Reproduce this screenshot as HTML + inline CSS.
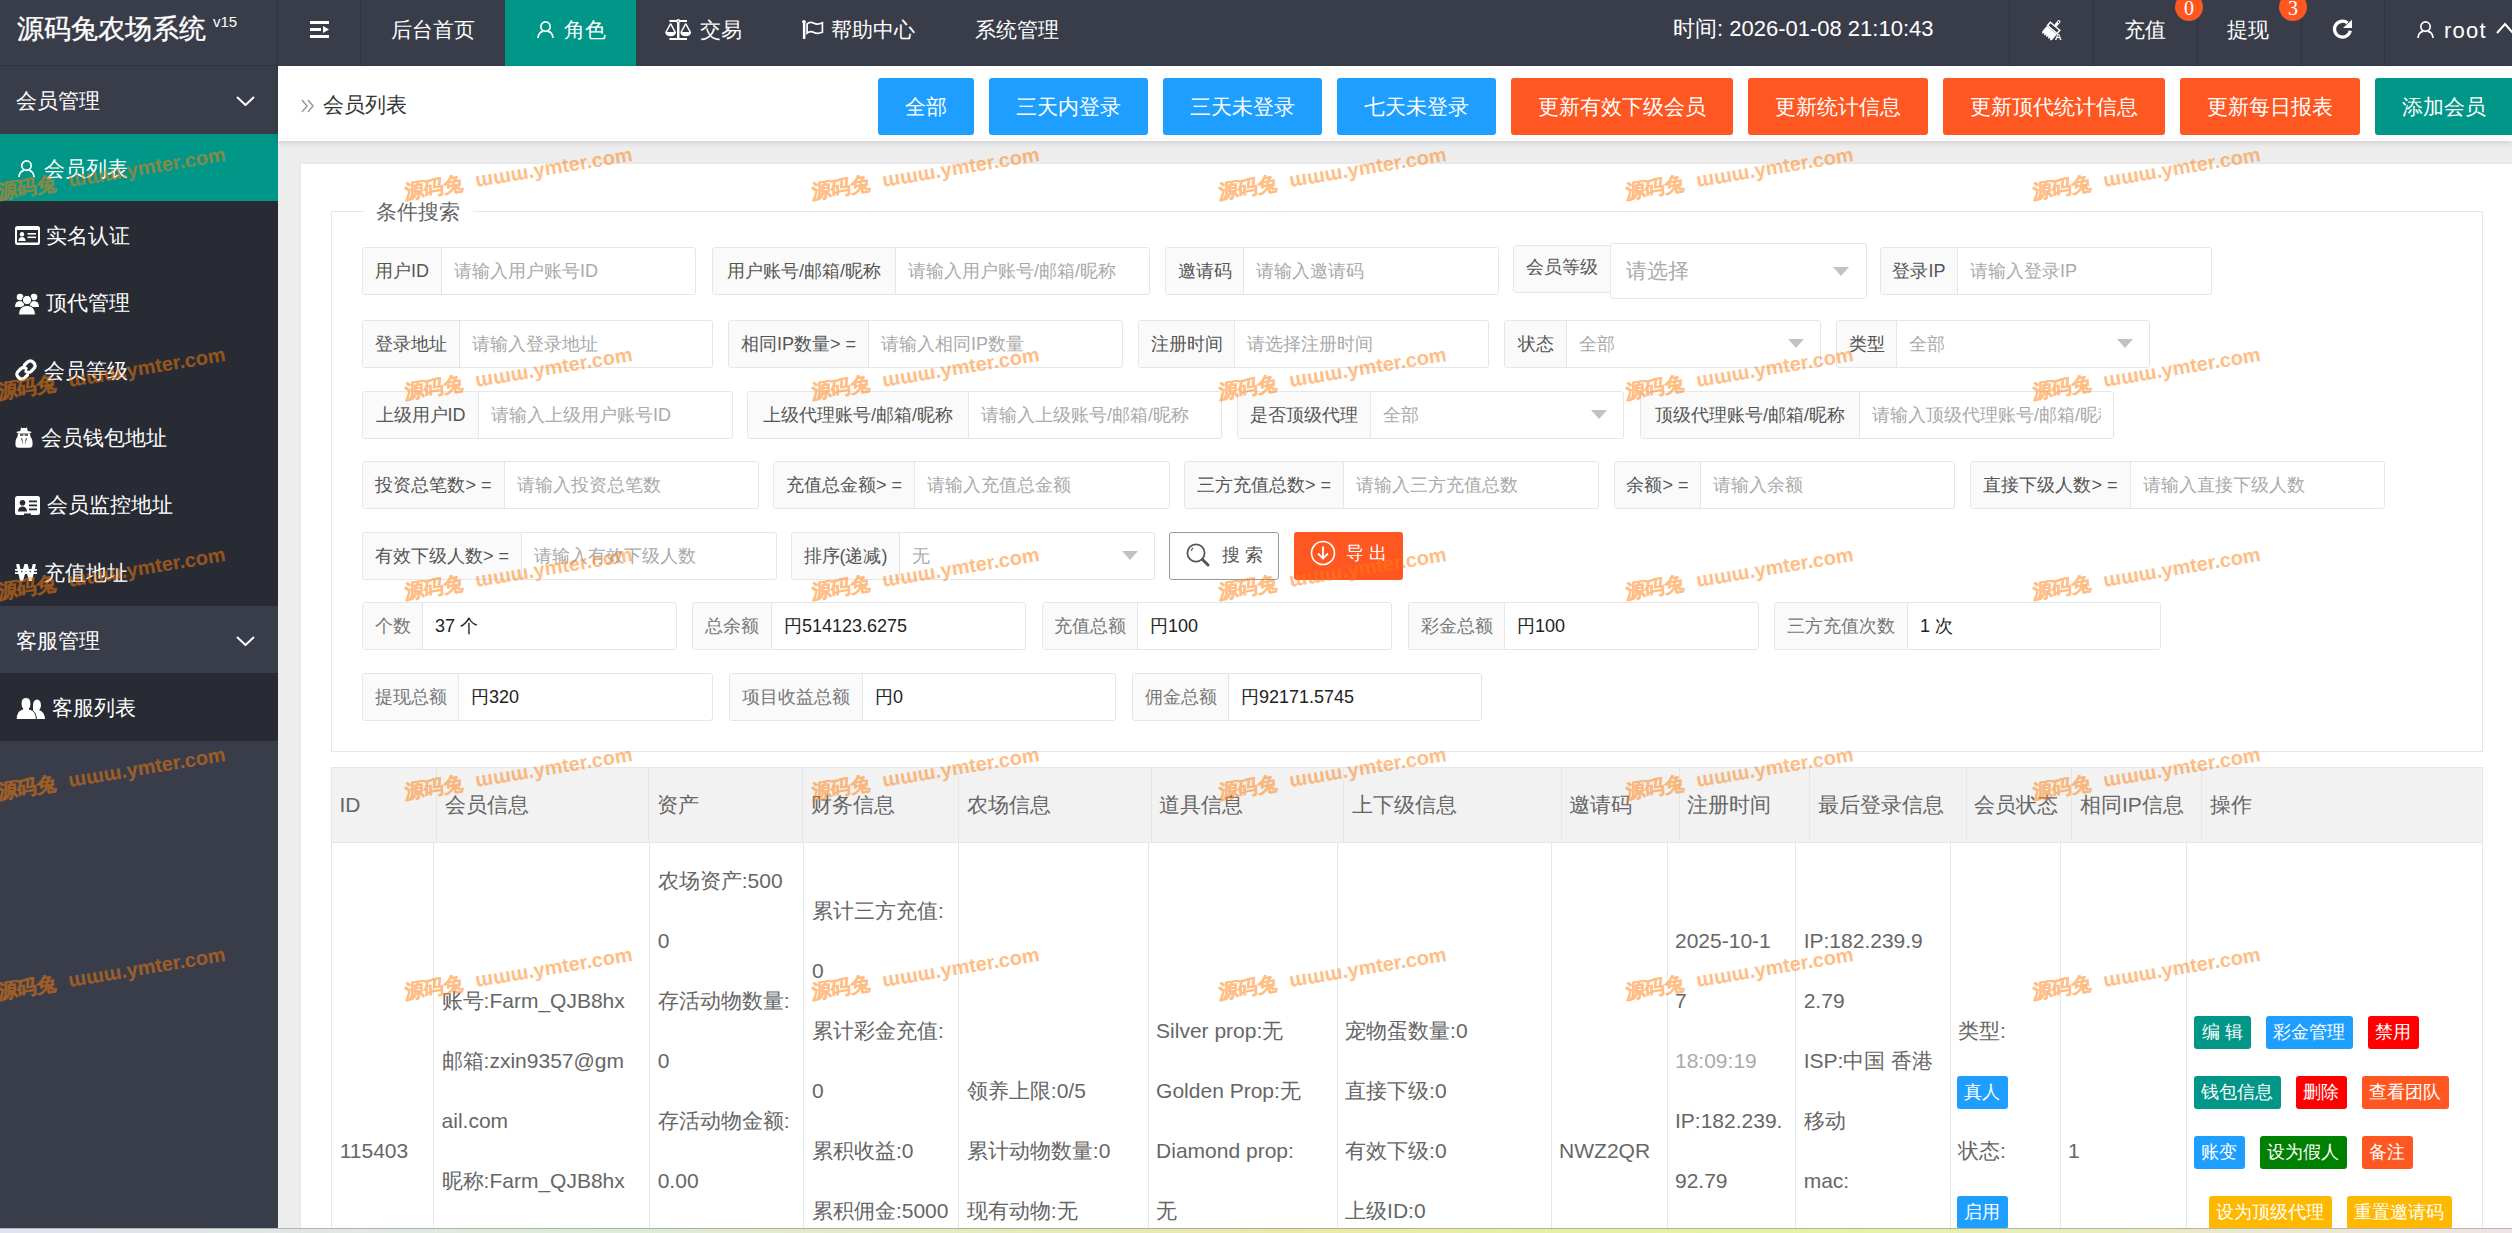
<!DOCTYPE html><html><head><meta charset="utf-8"><title>会员列表</title><style>
*{margin:0;padding:0;box-sizing:border-box}
html,body{width:2512px;height:1233px;overflow:hidden;background:#ededed}
body{position:relative;font-family:"Liberation Sans",sans-serif;color:#666}
.a{position:absolute}
.hd{left:0;top:0;width:2512px;height:66px;background:#393d49}
.hdt{position:absolute;color:#fff;font-size:21px;line-height:24px;white-space:nowrap}
.sep{position:absolute;top:0;width:1px;height:66px;background:#30333d}
.side{left:0;top:66px;width:278px;height:1167px;background:#393d49}
.sitem{position:absolute;left:0;width:278px;background:#282b33;color:#fff;font-size:21px}
.sgrp{position:absolute;left:0;width:278px;background:#393d49;color:#fff;font-size:21px}
.stx{position:absolute;white-space:nowrap;line-height:24px}
.bc{left:278px;top:66px;width:2234px;height:75px;background:#fff;box-shadow:0 2px 5px rgba(0,0,0,.12)}
.btn{position:absolute;top:78px;height:57px;border-radius:3px;color:#fff;font-size:21px;line-height:57px;text-align:center;white-space:nowrap}
.card{left:301px;top:164px;width:2211px;height:1070px;background:#fff;box-shadow:0 0 4px rgba(0,0,0,.05)}
.fs{left:331px;top:211px;width:2152px;height:541px;border:1px solid #e6e6e6;border-radius:0}
.grp{position:absolute;height:48px;border:1px solid #e6e6e6;border-radius:3px;background:#fff}
.lab{position:absolute;left:0;top:0;bottom:0;background:#fafafa;border-right:1px solid #e6e6e6;font-size:18px;color:#555;text-align:center;line-height:46px;white-space:nowrap;border-radius:2px 0 0 2px}
.inp{position:absolute;top:0;bottom:0;font-size:18px;color:#aaa;line-height:46px;padding-left:12px;white-space:nowrap;overflow:hidden}
.val{color:#222}
.arr{position:absolute;width:0;height:0;border-left:8.5px solid transparent;border-right:8.5px solid transparent;border-top:9px solid #c2c2c2}
.th{left:331px;top:767px;width:2152px;height:76px;background:#f2f2f2;border:1px solid #e6e6e6}
.vl{position:absolute;width:1px;background:#e6e6e6}
.tx{position:absolute;font-size:21px;color:#666;white-space:nowrap;line-height:60px}
.bdg{position:absolute;height:33px;border-radius:3px;color:#fff;font-size:18px;line-height:33px;text-align:center;white-space:nowrap}
.wm{position:absolute;white-space:nowrap;transform-origin:0 50%;pointer-events:none}
</style></head><body>
<div class="a hd"></div>
<div class="a" style="left:0;top:65px;width:278px;height:1px;background:#30333c"></div>
<div class="hdt" style="left:17px;top:14px;font-size:27px;line-height:30px;-webkit-text-stroke:0.35px #fff">源码兔农场系统</div>
<div class="hdt" style="left:213px;top:13px;font-size:15px;line-height:17px">v15</div>
<div class="sep" style="left:277px"></div><div class="sep" style="left:360px"></div>
<svg class="a" style="left:310px;top:21px" width="20" height="17" viewBox="0 0 20 17"><rect x="0" y="0" width="19" height="3" fill="#fff"/><rect x="0" y="7" width="11" height="3" fill="#fff"/><rect x="0" y="14" width="19" height="3" fill="#fff"/><path d="M13 5 L19 8.5 L13 12Z" fill="#fff"/></svg>
<div class="hdt" style="left:391px;top:18px">后台首页</div>
<div class="a" style="left:505px;top:0;width:131px;height:66px;background:#009688"></div>
<svg class="a" style="left:537px;top:21px" width="17" height="17" viewBox="0 0 17 17"><circle cx="8.5" cy="5.6" r="4.7" fill="none" stroke="#fff" stroke-width="1.7"/><path d="M1 17 C1.3 13 3.5 10.8 6 10.3 M11 10.3 C13.5 10.8 15.7 13 16 17" fill="none" stroke="#fff" stroke-width="1.7"/></svg>
<div class="hdt" style="left:564px;top:18px">角色</div>
<svg class="a" style="left:665px;top:19px" width="27" height="22" viewBox="0 0 27 22"><rect x="4.4" y="1" width="17.6" height="2" fill="#fff"/><circle cx="13.2" cy="2.1" r="2.1" fill="#fff"/><circle cx="13.2" cy="2.1" r="0.7" fill="#393d49"/><rect x="12" y="3.5" width="2.5" height="16" fill="#fff"/><rect x="4.4" y="19" width="17.6" height="2" fill="#fff"/><path d="M5.6 4.6 L0.9 13.3 M5.6 4.6 L10.3 13.3 M20.7 4.6 L16 13.3 M20.7 4.6 L25.4 13.3" fill="none" stroke="#fff" stroke-width="1.4"/><path d="M0.2 13 H11 Q10.6 17.3 5.6 17.3 Q0.6 17.3 0.2 13Z M15.3 13 H26.1 Q25.7 17.3 20.7 17.3 Q15.7 17.3 15.3 13Z" fill="#fff"/></svg>
<div class="hdt" style="left:700px;top:18px">交易</div>
<svg class="a" style="left:800px;top:18px" width="26" height="24" viewBox="0 0 26 24"><rect x="2.9" y="3" width="2.5" height="18" fill="#fff"/><circle cx="3.9" cy="3.8" r="1.8" fill="#fff"/><path d="M7.1 5.8 C9.5 3.8 12 4.3 14 5.3 C16 6.3 18.5 6.6 22.4 4.8 V14.2 C18.5 15.8 16 15.5 14 14.5 C12 13.5 9.5 13.2 7.1 15.2 Z" fill="none" stroke="#fff" stroke-width="1.7"/></svg>
<div class="hdt" style="left:831px;top:18px">帮助中心</div>
<div class="hdt" style="left:975px;top:18px">系统管理</div>
<div class="hdt" style="left:1673px;top:17px;font-size:22px">时间: 2026-01-08 21:10:43</div>
<div class="sep" style="left:2009px"></div>
<div class="sep" style="left:2093px"></div>
<div class="sep" style="left:2197px"></div>
<div class="sep" style="left:2301px"></div>
<div class="sep" style="left:2384px"></div>
<svg class="a" style="left:2038px;top:18px" width="26" height="23" viewBox="0 0 26 23"><g transform="translate(13.5 12.5) rotate(40)"><rect x="-1.6" y="-13" width="3.2" height="7.5" rx="1.6" fill="#fff"/><circle cx="0" cy="-11" r="0.8" fill="#393d49"/><rect x="-6.2" y="-5.5" width="12.4" height="4.2" fill="none" stroke="#fff" stroke-width="1.5"/><path d="M-6.5 -0.5 H6.5 V6.5 L5.2 8.6 L3.9 6.5 L2.6 8.6 L1.3 6.5 L0 8.6 L-1.3 6.5 L-2.6 8.6 L-3.9 6.5 L-5.2 8.6 L-6.5 6.5Z" fill="#fff"/></g><text x="16.8" y="22" font-size="9.5" font-weight="bold" fill="#fff" font-family="Liberation Sans">A</text></svg>
<div class="hdt" style="left:2124px;top:18px">充值</div>
<div class="a" style="left:2175px;top:-7px;width:28px;height:28px;border-radius:14px;background:#ff5722;color:#fff;font-size:20px;line-height:30px;text-align:center;font-family:'Liberation Serif',serif">0</div>
<div class="hdt" style="left:2227px;top:18px">提现</div>
<div class="a" style="left:2279px;top:-7px;width:28px;height:28px;border-radius:14px;background:#ff5722;color:#fff;font-size:20px;line-height:30px;text-align:center;font-family:'Liberation Serif',serif">3</div>
<svg class="a" style="left:2332px;top:18px" width="22" height="22" viewBox="0 0 22 22"><path d="M18.28 12.75 A7.95 7.95 0 1 1 15.6 5.0" fill="none" stroke="#fff" stroke-width="3.3"/><path d="M20 1.7 V10 H11Z" fill="#fff"/></svg>
<svg class="a" style="left:2417px;top:21px" width="17" height="17" viewBox="0 0 17 17"><circle cx="8.5" cy="5.6" r="4.7" fill="none" stroke="#fff" stroke-width="1.7"/><path d="M1 17 C1.3 13 3.5 10.8 6 10.3 M11 10.3 C13.5 10.8 15.7 13 16 17" fill="none" stroke="#fff" stroke-width="1.7"/></svg>
<div class="hdt" style="left:2444px;top:19px;font-size:22px;letter-spacing:1.2px">root</div>
<svg class="a" style="left:2496px;top:22px" width="18" height="12" viewBox="0 0 18 12"><path d="M1 11 L9 2 L17 11" fill="none" stroke="#fff" stroke-width="2"/></svg>
<div class="a side"></div>
<div class="sgrp" style="top:66px;height:68px"><div class="stx" style="left:16px;top:23px">会员管理</div></div>
<svg class="a" style="left:236px;top:96px" width="19" height="10" viewBox="0 0 19 10"><path d="M1 1 L9.5 9 L18 1" fill="none" stroke="#fff" stroke-width="2"/></svg>
<div class="sitem" style="top:134px;height:68px;background:#009688"><div class="stx" style="left:44px;top:23px">会员列表</div></div>
<div class="sitem" style="top:201px;height:68px;background:#282b33"><div class="stx" style="left:46px;top:23px">实名认证</div></div>
<div class="sitem" style="top:268px;height:68px;background:#282b33"><div class="stx" style="left:46px;top:23px">顶代管理</div></div>
<div class="sitem" style="top:336px;height:68px;background:#282b33"><div class="stx" style="left:44px;top:23px">会员等级</div></div>
<div class="sitem" style="top:403px;height:68px;background:#282b33"><div class="stx" style="left:41px;top:23px">会员钱包地址</div></div>
<div class="sitem" style="top:470px;height:68px;background:#282b33"><div class="stx" style="left:47px;top:23px">会员监控地址</div></div>
<div class="sitem" style="top:538px;height:68px;background:#282b33"><div class="stx" style="left:44px;top:23px">充值地址</div></div>
<div class="sgrp" style="top:606px;height:67px"><div class="stx" style="left:16px;top:23px">客服管理</div></div>
<svg class="a" style="left:236px;top:636px" width="19" height="10" viewBox="0 0 19 10"><path d="M1 1 L9.5 9 L18 1" fill="none" stroke="#fff" stroke-width="2"/></svg>
<div class="sitem" style="top:673px;height:68px"><div class="stx" style="left:52px;top:23px">客服列表</div></div>
<svg class="a" style="left:18px;top:160px" width="17" height="17" viewBox="0 0 17 17"><circle cx="8.5" cy="5.6" r="4.7" fill="none" stroke="#fff" stroke-width="1.7"/><path d="M1 17 C1.3 13 3.5 10.8 6 10.3 M11 10.3 C13.5 10.8 15.7 13 16 17" fill="none" stroke="#fff" stroke-width="1.7"/></svg>
<svg class="a" style="left:15px;top:226px" width="25" height="19" viewBox="0 0 25 19"><rect x="0" y="0" width="25" height="19" rx="2.5" fill="#fff"/><rect x="2" y="4" width="21" height="12.5" fill="#282b33"/><circle cx="7" cy="8.2" r="2.2" fill="#fff"/><path d="M3.3 15 Q3.8 11 7 11 Q10.2 11 10.7 15Z" fill="#fff"/><rect x="12.5" y="7" width="8.5" height="1.6" fill="#fff"/><rect x="12.5" y="10.5" width="8.5" height="1.6" fill="#fff"/></svg>
<svg class="a" style="left:15px;top:292px" width="24" height="23" viewBox="0 0 24 23"><circle cx="5" cy="5" r="3.3" fill="#fff"/><circle cx="19" cy="5" r="3.3" fill="#fff"/><path d="M0 15 Q0 9 5 9 Q8 9 9 11 L9 15Z M24 15 Q24 9 19 9 Q16 9 15 11 L15 15Z" fill="#fff"/><circle cx="12" cy="8" r="4.6" fill="#fff" stroke="#282b33" stroke-width="1"/><path d="M3.5 23 Q3.5 14 12 13.3 Q20.5 14 20.5 23Z" fill="#fff" stroke="#282b33" stroke-width="1"/></svg>
<svg class="a" style="left:15px;top:359px" width="22" height="22" viewBox="0 0 22 22"><g fill="none" stroke="#fff" stroke-width="3.2" stroke-linecap="round"><path d="M9.5 6 L12.5 3 Q15.5 0.5 18.5 3.5 Q21.5 6.5 19 9.5 L16 12.5 Q13.5 14.5 11 12.5"/><path d="M12.5 16 L9.5 19 Q6.5 21.5 3.5 18.5 Q0.5 15.5 3 12.5 L6 9.5 Q8.5 7.5 11 9.5"/></g></svg>
<svg class="a" style="left:15px;top:427px" width="18" height="21" viewBox="0 0 18 21"><path d="M5 5.5 L6 0.6 Q9 1.6 12 0.6 L13 5.5Z" fill="#fff"/><ellipse cx="9" cy="5.2" rx="7.6" ry="1.4" fill="#fff"/><path d="M3 6.3 Q9 7.8 15 6.3 L15.3 9 Q17.6 12 17.6 17 Q17.6 20.8 14.8 20.8 H3.2 Q0.4 20.8 0.4 17 Q0.4 12 2.7 9Z" fill="#fff"/><rect x="5" y="7.2" width="3.4" height="1.5" fill="#282b33"/><rect x="9.6" y="7.2" width="3.4" height="1.5" fill="#282b33"/><path d="M6 11.3 L7.2 11.3 L8.2 18Z M12 11.3 L10.8 11.3 L9.8 18Z" fill="#282b33"/></svg>
<svg class="a" style="left:15px;top:496px" width="25" height="19" viewBox="0 0 25 19"><path d="M2.5 0 H22.5 Q25 0 25 2.5 V16.5 Q25 19 22.5 19 H16 V17.5 H9 V19 H2.5 Q0 19 0 16.5 V2.5 Q0 0 2.5 0Z" fill="#fff"/><circle cx="7.5" cy="6.8" r="2.8" fill="#282b33"/><path d="M3 15.5 Q3.3 10.5 7.5 10.5 Q11.7 10.5 12 15.5Z" fill="#282b33"/><rect x="14" y="4.5" width="8" height="1.8" fill="#282b33"/><rect x="14" y="8.5" width="8" height="1.8" fill="#282b33"/><rect x="14" y="12.5" width="8" height="1.8" fill="#282b33"/></svg>
<svg class="a" style="left:15px;top:564px" width="22" height="17" viewBox="0 0 22 17"><path d="M2.6 0 L6.6 16 L11 0.5 L15.4 16 L19.4 0" fill="none" stroke="#fff" stroke-width="3.2" stroke-linejoin="miter" stroke-miterlimit="10"/><rect x="0" y="5" width="22" height="1.8" fill="#fff"/><rect x="0" y="8.2" width="22" height="1.8" fill="#fff"/></svg>
<svg class="a" style="left:16px;top:697px" width="29" height="23" viewBox="0 0 29 23"><path d="M17 9 Q17 2.5 21 2.5 Q25 2.5 25 9 Q24.5 12 23 13 Q28.5 14.5 29 22 H17Z" fill="#fff"/><path d="M10 0.5 Q15 0.5 15 7 Q15 10.5 13 12 Q20 13.5 20.5 22.5 H0 Q0.5 13.5 7 12 Q5 10.5 5 7 Q5 0.5 10 0.5Z" fill="#fff" stroke="#282b33" stroke-width="1"/></svg>
<div class="a bc"></div>
<svg class="a" style="left:301px;top:99px" width="14" height="14" viewBox="0 0 14 14"><path d="M1 1 L6 7 L1 13 M7 1 L12 7 L7 13" fill="none" stroke="#999" stroke-width="1.5"/></svg>
<div class="a" style="left:323px;top:93px;font-size:21px;color:#333;line-height:24px;white-space:nowrap">会员列表</div>
<div class="btn" style="left:878px;width:96px;background:#1e9fff;">全部</div>
<div class="btn" style="left:989px;width:159px;background:#1e9fff;">三天内登录</div>
<div class="btn" style="left:1163px;width:159px;background:#1e9fff;">三天未登录</div>
<div class="btn" style="left:1337px;width:159px;background:#1e9fff;">七天未登录</div>
<div class="btn" style="left:1511px;width:222px;background:#ff5722;">更新有效下级会员</div>
<div class="btn" style="left:1748px;width:180px;background:#ff5722;">更新统计信息</div>
<div class="btn" style="left:1943px;width:222px;background:#ff5722;">更新顶代统计信息</div>
<div class="btn" style="left:2180px;width:180px;background:#ff5722;">更新每日报表</div>
<div class="btn" style="left:2375px;width:155px;background:#009688;padding-right:18px;">添加会员</div>
<div class="a card"></div>
<div class="a fs"></div>
<div class="a" style="left:363px;top:200px;padding:0 13px;background:#fff;font-size:21px;color:#666;line-height:24px;white-space:nowrap">条件搜索</div>
<div class="grp" style="left:362px;top:247px;width:334px">
<div class="lab" style="width:79px">用户ID</div>
<div class="inp" style="left:79px;right:12px">请输入用户账号ID</div>
</div>
<div class="grp" style="left:712px;top:247px;width:438px">
<div class="lab" style="width:183px">用户账号/邮箱/昵称</div>
<div class="inp" style="left:183px;right:12px">请输入用户账号/邮箱/昵称</div>
</div>
<div class="grp" style="left:1165px;top:247px;width:334px">
<div class="lab" style="width:78px">邀请码</div>
<div class="inp" style="left:78px;right:12px">请输入邀请码</div>
</div>
<div class="grp" style="left:1513px;top:245px;width:98px;height:48px;border-radius:3px 0 0 3px"><div class="lab" style="width:96px;border-right:0;line-height:43px">会员等级</div></div>
<div class="grp" style="left:1610px;top:243px;width:257px;height:56px"><div class="inp" style="left:0;line-height:53px;font-size:21px;padding-left:15px">请选择</div><div class="arr" style="left:222px;top:23px"></div></div>
<div class="grp" style="left:1880px;top:247px;width:332px">
<div class="lab" style="width:77px">登录IP</div>
<div class="inp" style="left:77px;right:12px">请输入登录IP</div>
</div>
<div class="grp" style="left:362px;top:320px;width:351px">
<div class="lab" style="width:97px">登录地址</div>
<div class="inp" style="left:97px;right:12px">请输入登录地址</div>
</div>
<div class="grp" style="left:728px;top:320px;width:395px">
<div class="lab" style="width:140px">相同IP数量&gt; =</div>
<div class="inp" style="left:140px;right:12px">请输入相同IP数量</div>
</div>
<div class="grp" style="left:1138px;top:320px;width:351px">
<div class="lab" style="width:96px">注册时间</div>
<div class="inp" style="left:96px;right:12px">请选择注册时间</div>
</div>
<div class="grp" style="left:1504px;top:320px;width:317px">
<div class="lab" style="width:62px">状态</div>
<div class="inp" style="left:62px;right:12px">全部</div>
<div class="arr" style="left:283px;top:18px"></div>
</div>
<div class="grp" style="left:1836px;top:320px;width:314px">
<div class="lab" style="width:60px">类型</div>
<div class="inp" style="left:60px;right:12px">全部</div>
<div class="arr" style="left:280px;top:18px"></div>
</div>
<div class="grp" style="left:362px;top:391px;width:371px">
<div class="lab" style="width:116px">上级用户ID</div>
<div class="inp" style="left:116px;right:12px">请输入上级用户账号ID</div>
</div>
<div class="grp" style="left:747px;top:391px;width:475px">
<div class="lab" style="width:221px">上级代理账号/邮箱/昵称</div>
<div class="inp" style="left:221px;right:12px">请输入上级账号/邮箱/昵称</div>
</div>
<div class="grp" style="left:1237px;top:391px;width:387px">
<div class="lab" style="width:133px">是否顶级代理</div>
<div class="inp" style="left:133px;right:12px">全部</div>
<div class="arr" style="left:353px;top:18px"></div>
</div>
<div class="grp" style="left:1640px;top:391px;width:474px">
<div class="lab" style="width:219px">顶级代理账号/邮箱/昵称</div>
<div class="inp" style="left:219px;right:12px">请输入顶级代理账号/邮箱/昵称</div>
</div>
<div class="grp" style="left:362px;top:461px;width:397px">
<div class="lab" style="width:142px">投资总笔数&gt; =</div>
<div class="inp" style="left:142px;right:12px">请输入投资总笔数</div>
</div>
<div class="grp" style="left:773px;top:461px;width:397px">
<div class="lab" style="width:141px">充值总金额&gt; =</div>
<div class="inp" style="left:141px;right:12px">请输入充值总金额</div>
</div>
<div class="grp" style="left:1184px;top:461px;width:415px">
<div class="lab" style="width:159px">三方充值总数&gt; =</div>
<div class="inp" style="left:159px;right:12px">请输入三方充值总数</div>
</div>
<div class="grp" style="left:1614px;top:461px;width:341px">
<div class="lab" style="width:86px">余额&gt; =</div>
<div class="inp" style="left:86px;right:12px">请输入余额</div>
</div>
<div class="grp" style="left:1970px;top:461px;width:415px">
<div class="lab" style="width:160px">直接下级人数&gt; =</div>
<div class="inp" style="left:160px;right:12px">请输入直接下级人数</div>
</div>
<div class="grp" style="left:362px;top:532px;width:415px">
<div class="lab" style="width:159px">有效下级人数&gt; =</div>
<div class="inp" style="left:159px;right:12px">请输入有效下级人数</div>
</div>
<div class="grp" style="left:791px;top:532px;width:364px">
<div class="lab" style="width:108px">排序(递减)</div>
<div class="inp" style="left:108px;right:12px">无</div>
<div class="arr" style="left:330px;top:18px"></div>
</div>
<div class="a" style="left:1169.4px;top:532.3px;width:109.4px;height:47.4px;border:1px solid #999;border-radius:3px;background:#fff"></div>
<svg class="a" style="left:1186px;top:543px" width="26" height="25" viewBox="0 0 26 25"><circle cx="10" cy="10" r="8.6" fill="none" stroke="#555" stroke-width="1.8"/><path d="M16.5 16.5 L22 22" stroke="#555" stroke-width="3" stroke-linecap="round"/><path d="M5.5 8 Q5.5 6 7 5" fill="none" stroke="#555" stroke-width="1.2"/></svg>
<div class="a" style="left:1222px;top:543px;font-size:18px;color:#555;line-height:24px;letter-spacing:5px;white-space:nowrap">搜索</div>
<div class="a" style="left:1294.1px;top:532px;width:108.6px;height:47.7px;border-radius:3px;background:#ff5722"></div>
<svg class="a" style="left:1310px;top:540px" width="26" height="26" viewBox="0 0 26 26"><circle cx="13" cy="13" r="11.5" fill="none" stroke="#fff" stroke-width="1.6"/><path d="M13 6.5 V18 M8 13.5 L13 18.5 L18 13.5" fill="none" stroke="#fff" stroke-width="1.8"/></svg>
<div class="a" style="left:1346px;top:541px;font-size:18px;color:#fff;line-height:24px;letter-spacing:5px;white-space:nowrap">导出</div>
<div class="grp" style="left:362px;top:602px;width:315px">
<div class="lab" style="width:60px;color:#777">个数</div>
<div class="inp val" style="left:60px;right:12px">37 个</div>
</div>
<div class="grp" style="left:692px;top:602px;width:334px">
<div class="lab" style="width:79px;color:#777">总余额</div>
<div class="inp val" style="left:79px;right:12px">円514123.6275</div>
</div>
<div class="grp" style="left:1042px;top:602px;width:350px">
<div class="lab" style="width:95px;color:#777">充值总额</div>
<div class="inp val" style="left:95px;right:12px">円100</div>
</div>
<div class="grp" style="left:1408px;top:602px;width:351px">
<div class="lab" style="width:96px;color:#777">彩金总额</div>
<div class="inp val" style="left:96px;right:12px">円100</div>
</div>
<div class="grp" style="left:1774px;top:602px;width:387px">
<div class="lab" style="width:133px;color:#777">三方充值次数</div>
<div class="inp val" style="left:133px;right:12px">1 次</div>
</div>
<div class="grp" style="left:362px;top:673px;width:351px">
<div class="lab" style="width:96px;color:#777">提现总额</div>
<div class="inp val" style="left:96px;right:12px">円320</div>
</div>
<div class="grp" style="left:729px;top:673px;width:387px">
<div class="lab" style="width:133px;color:#777">项目收益总额</div>
<div class="inp val" style="left:133px;right:12px">円0</div>
</div>
<div class="grp" style="left:1132px;top:673px;width:350px">
<div class="lab" style="width:96px;color:#777">佣金总额</div>
<div class="inp val" style="left:96px;right:12px">円92171.5745</div>
</div>
<div class="a th"></div>
<div class="vl" style="left:436.0px;top:768px;height:74px"></div>
<div class="vl" style="left:648.0px;top:768px;height:74px"></div>
<div class="vl" style="left:802.4px;top:768px;height:74px"></div>
<div class="vl" style="left:958.4px;top:768px;height:74px"></div>
<div class="vl" style="left:1150.6px;top:768px;height:74px"></div>
<div class="vl" style="left:1343.4px;top:768px;height:74px"></div>
<div class="vl" style="left:1560.5px;top:768px;height:74px"></div>
<div class="vl" style="left:1678.6px;top:768px;height:74px"></div>
<div class="vl" style="left:1809.4px;top:768px;height:74px"></div>
<div class="vl" style="left:1965.6px;top:768px;height:74px"></div>
<div class="vl" style="left:2071.4px;top:768px;height:74px"></div>
<div class="vl" style="left:2201.3px;top:768px;height:74px"></div>
<div class="tx" style="left:339.5px;top:775px">ID</div>
<div class="tx" style="left:444.5px;top:775px">会员信息</div>
<div class="tx" style="left:656.5px;top:775px">资产</div>
<div class="tx" style="left:810.9px;top:775px">财务信息</div>
<div class="tx" style="left:966.9px;top:775px">农场信息</div>
<div class="tx" style="left:1159.1px;top:775px">道具信息</div>
<div class="tx" style="left:1351.9px;top:775px">上下级信息</div>
<div class="tx" style="left:1569.0px;top:775px">邀请码</div>
<div class="tx" style="left:1687.1px;top:775px">注册时间</div>
<div class="tx" style="left:1817.9px;top:775px">最后登录信息</div>
<div class="tx" style="left:1974.1px;top:775px">会员状态</div>
<div class="tx" style="left:2079.9px;top:775px">相同IP信息</div>
<div class="tx" style="left:2209.8px;top:775px">操作</div>
<div class="vl" style="left:331.2px;top:843px;height:400px"></div>
<div class="vl" style="left:433.1px;top:843px;height:400px"></div>
<div class="vl" style="left:649.2px;top:843px;height:400px"></div>
<div class="vl" style="left:803.4px;top:843px;height:400px"></div>
<div class="vl" style="left:958.3px;top:843px;height:400px"></div>
<div class="vl" style="left:1147.6px;top:843px;height:400px"></div>
<div class="vl" style="left:1336.6px;top:843px;height:400px"></div>
<div class="vl" style="left:1550.6px;top:843px;height:400px"></div>
<div class="vl" style="left:1666.5px;top:843px;height:400px"></div>
<div class="vl" style="left:1795.2px;top:843px;height:400px"></div>
<div class="vl" style="left:1949.6px;top:843px;height:400px"></div>
<div class="vl" style="left:2059.5px;top:843px;height:400px"></div>
<div class="vl" style="left:2186.4px;top:843px;height:400px"></div>
<div class="vl" style="left:2482.4px;top:843px;height:400px"></div>
<div class="tx" style="left:339.7px;top:1121px">115403</div>
<div class="tx" style="left:441.6px;top:971px">账号:Farm_QJB8hx<br>邮箱:zxin9357@gm<br>ail.com<br>昵称:Farm_QJB8hx</div>
<div class="tx" style="left:657.7px;top:851px">农场资产:500<br>0<br>存活动物数量:<br>0<br>存活动物金额:<br>0.00</div>
<div class="tx" style="left:811.9px;top:881px">累计三方充值:<br>0<br>累计彩金充值:<br>0<br>累积收益:0<br>累积佣金:5000</div>
<div class="tx" style="left:966.8px;top:1061px">领养上限:0/5<br>累计动物数量:0<br>现有动物:无</div>
<div class="tx" style="left:1156.1px;top:1001px">Silver prop:无<br>Golden Prop:无<br>Diamond prop:<br>无</div>
<div class="tx" style="left:1345.1px;top:1001px">宠物蛋数量:0<br>直接下级:0<br>有效下级:0<br>上级ID:0</div>
<div class="tx" style="left:1559.1px;top:1121px">NWZ2QR</div>
<div class="tx" style="left:1675.0px;top:911px">2025-10-1<br>7<br><span style="color:#aaa">18:09:19</span><br>IP:182.239.<br>92.79</div>
<div class="tx" style="left:1803.7px;top:911px">IP:182.239.9<br>2.79<br>ISP:中国 香港<br>移动<br>mac:</div>
<div class="tx" style="left:1958.1px;top:1001px">类型:<br><br>状态:<br></div>
<div class="tx" style="left:2068.0px;top:1121px">1</div>
<div class="bdg" style="left:1957.0px;top:1075.8px;width:50.6px;background:#1e9fff">真人</div>
<div class="bdg" style="left:1957.0px;top:1195.8px;width:50.6px;background:#1e9fff">启用</div>
<div class="bdg" style="left:2193.9px;top:1015.9px;width:56.9px;background:#009688">编 辑</div>
<div class="bdg" style="left:2266.0px;top:1015.9px;width:86.8px;background:#1e9fff">彩金管理</div>
<div class="bdg" style="left:2368.0px;top:1015.9px;width:50.8px;background:#ff0000">禁用</div>
<div class="bdg" style="left:2193.9px;top:1075.8px;width:86.9px;background:#009688">钱包信息</div>
<div class="bdg" style="left:2295.9px;top:1075.8px;width:51.0px;background:#ff0000">删除</div>
<div class="bdg" style="left:2361.9px;top:1075.8px;width:87.0px;background:#ff5722">查看团队</div>
<div class="bdg" style="left:2193.9px;top:1135.9px;width:50.8px;background:#1e9fff">账变</div>
<div class="bdg" style="left:2259.9px;top:1135.9px;width:87.0px;background:#008000">设为假人</div>
<div class="bdg" style="left:2361.9px;top:1135.9px;width:51.0px;background:#ff5722">备注</div>
<div class="bdg" style="left:2208.7px;top:1195.8px;width:122.9px;background:#ffb800">设为顶级代理</div>
<div class="bdg" style="left:2346.9px;top:1195.8px;width:104.9px;background:#ffb800">重置邀请码</div>
<div class="a" style="left:0;top:1228px;width:2512px;height:1px;background:linear-gradient(90deg,#b6b6c0 0%,#acb0a6 25%,#b0b08c 50%,#b0b88c 72%,#b8b4b4 100%)"></div>
<div class="a" style="left:0;top:1229px;width:2512px;height:4px;background:linear-gradient(90deg,#e2e2ee 0%,#deecd7 25%,#eae8ac 50%,#e4f2a5 72%,#ece8c8 88%,#f0e4e4 100%)"></div>
<div class="wm" style="left:-2px;top:179px;transform:rotate(-9.5deg);opacity:.5;color:#ff7f0a"><span style="display:inline-block;font-size:20px;font-weight:bold;-webkit-text-stroke:0.3px #ff7f0a;transform:skewX(-8deg);letter-spacing:-0.5px">源码兔</span><span style="display:inline-block;margin-left:13px;font-size:20px;font-weight:bold;letter-spacing:0px">ɯɯɯ.ymter.com</span></div>
<div class="wm" style="left:405px;top:179px;transform:rotate(-9.5deg);opacity:.5;color:#ff7f0a"><span style="display:inline-block;font-size:20px;font-weight:bold;-webkit-text-stroke:0.3px #ff7f0a;transform:skewX(-8deg);letter-spacing:-0.5px">源码兔</span><span style="display:inline-block;margin-left:13px;font-size:20px;font-weight:bold;letter-spacing:0px">ɯɯɯ.ymter.com</span></div>
<div class="wm" style="left:812px;top:179px;transform:rotate(-9.5deg);opacity:.5;color:#ff7f0a"><span style="display:inline-block;font-size:20px;font-weight:bold;-webkit-text-stroke:0.3px #ff7f0a;transform:skewX(-8deg);letter-spacing:-0.5px">源码兔</span><span style="display:inline-block;margin-left:13px;font-size:20px;font-weight:bold;letter-spacing:0px">ɯɯɯ.ymter.com</span></div>
<div class="wm" style="left:1219px;top:179px;transform:rotate(-9.5deg);opacity:.5;color:#ff7f0a"><span style="display:inline-block;font-size:20px;font-weight:bold;-webkit-text-stroke:0.3px #ff7f0a;transform:skewX(-8deg);letter-spacing:-0.5px">源码兔</span><span style="display:inline-block;margin-left:13px;font-size:20px;font-weight:bold;letter-spacing:0px">ɯɯɯ.ymter.com</span></div>
<div class="wm" style="left:1626px;top:179px;transform:rotate(-9.5deg);opacity:.5;color:#ff7f0a"><span style="display:inline-block;font-size:20px;font-weight:bold;-webkit-text-stroke:0.3px #ff7f0a;transform:skewX(-8deg);letter-spacing:-0.5px">源码兔</span><span style="display:inline-block;margin-left:13px;font-size:20px;font-weight:bold;letter-spacing:0px">ɯɯɯ.ymter.com</span></div>
<div class="wm" style="left:2033px;top:179px;transform:rotate(-9.5deg);opacity:.5;color:#ff7f0a"><span style="display:inline-block;font-size:20px;font-weight:bold;-webkit-text-stroke:0.3px #ff7f0a;transform:skewX(-8deg);letter-spacing:-0.5px">源码兔</span><span style="display:inline-block;margin-left:13px;font-size:20px;font-weight:bold;letter-spacing:0px">ɯɯɯ.ymter.com</span></div>
<div class="wm" style="left:-2px;top:379px;transform:rotate(-9.5deg);opacity:.5;color:#ff7f0a"><span style="display:inline-block;font-size:20px;font-weight:bold;-webkit-text-stroke:0.3px #ff7f0a;transform:skewX(-8deg);letter-spacing:-0.5px">源码兔</span><span style="display:inline-block;margin-left:13px;font-size:20px;font-weight:bold;letter-spacing:0px">ɯɯɯ.ymter.com</span></div>
<div class="wm" style="left:405px;top:379px;transform:rotate(-9.5deg);opacity:.5;color:#ff7f0a"><span style="display:inline-block;font-size:20px;font-weight:bold;-webkit-text-stroke:0.3px #ff7f0a;transform:skewX(-8deg);letter-spacing:-0.5px">源码兔</span><span style="display:inline-block;margin-left:13px;font-size:20px;font-weight:bold;letter-spacing:0px">ɯɯɯ.ymter.com</span></div>
<div class="wm" style="left:812px;top:379px;transform:rotate(-9.5deg);opacity:.5;color:#ff7f0a"><span style="display:inline-block;font-size:20px;font-weight:bold;-webkit-text-stroke:0.3px #ff7f0a;transform:skewX(-8deg);letter-spacing:-0.5px">源码兔</span><span style="display:inline-block;margin-left:13px;font-size:20px;font-weight:bold;letter-spacing:0px">ɯɯɯ.ymter.com</span></div>
<div class="wm" style="left:1219px;top:379px;transform:rotate(-9.5deg);opacity:.5;color:#ff7f0a"><span style="display:inline-block;font-size:20px;font-weight:bold;-webkit-text-stroke:0.3px #ff7f0a;transform:skewX(-8deg);letter-spacing:-0.5px">源码兔</span><span style="display:inline-block;margin-left:13px;font-size:20px;font-weight:bold;letter-spacing:0px">ɯɯɯ.ymter.com</span></div>
<div class="wm" style="left:1626px;top:379px;transform:rotate(-9.5deg);opacity:.5;color:#ff7f0a"><span style="display:inline-block;font-size:20px;font-weight:bold;-webkit-text-stroke:0.3px #ff7f0a;transform:skewX(-8deg);letter-spacing:-0.5px">源码兔</span><span style="display:inline-block;margin-left:13px;font-size:20px;font-weight:bold;letter-spacing:0px">ɯɯɯ.ymter.com</span></div>
<div class="wm" style="left:2033px;top:379px;transform:rotate(-9.5deg);opacity:.5;color:#ff7f0a"><span style="display:inline-block;font-size:20px;font-weight:bold;-webkit-text-stroke:0.3px #ff7f0a;transform:skewX(-8deg);letter-spacing:-0.5px">源码兔</span><span style="display:inline-block;margin-left:13px;font-size:20px;font-weight:bold;letter-spacing:0px">ɯɯɯ.ymter.com</span></div>
<div class="wm" style="left:-2px;top:579px;transform:rotate(-9.5deg);opacity:.5;color:#ff7f0a"><span style="display:inline-block;font-size:20px;font-weight:bold;-webkit-text-stroke:0.3px #ff7f0a;transform:skewX(-8deg);letter-spacing:-0.5px">源码兔</span><span style="display:inline-block;margin-left:13px;font-size:20px;font-weight:bold;letter-spacing:0px">ɯɯɯ.ymter.com</span></div>
<div class="wm" style="left:405px;top:579px;transform:rotate(-9.5deg);opacity:.5;color:#ff7f0a"><span style="display:inline-block;font-size:20px;font-weight:bold;-webkit-text-stroke:0.3px #ff7f0a;transform:skewX(-8deg);letter-spacing:-0.5px">源码兔</span><span style="display:inline-block;margin-left:13px;font-size:20px;font-weight:bold;letter-spacing:0px">ɯɯɯ.ymter.com</span></div>
<div class="wm" style="left:812px;top:579px;transform:rotate(-9.5deg);opacity:.5;color:#ff7f0a"><span style="display:inline-block;font-size:20px;font-weight:bold;-webkit-text-stroke:0.3px #ff7f0a;transform:skewX(-8deg);letter-spacing:-0.5px">源码兔</span><span style="display:inline-block;margin-left:13px;font-size:20px;font-weight:bold;letter-spacing:0px">ɯɯɯ.ymter.com</span></div>
<div class="wm" style="left:1219px;top:579px;transform:rotate(-9.5deg);opacity:.5;color:#ff7f0a"><span style="display:inline-block;font-size:20px;font-weight:bold;-webkit-text-stroke:0.3px #ff7f0a;transform:skewX(-8deg);letter-spacing:-0.5px">源码兔</span><span style="display:inline-block;margin-left:13px;font-size:20px;font-weight:bold;letter-spacing:0px">ɯɯɯ.ymter.com</span></div>
<div class="wm" style="left:1626px;top:579px;transform:rotate(-9.5deg);opacity:.5;color:#ff7f0a"><span style="display:inline-block;font-size:20px;font-weight:bold;-webkit-text-stroke:0.3px #ff7f0a;transform:skewX(-8deg);letter-spacing:-0.5px">源码兔</span><span style="display:inline-block;margin-left:13px;font-size:20px;font-weight:bold;letter-spacing:0px">ɯɯɯ.ymter.com</span></div>
<div class="wm" style="left:2033px;top:579px;transform:rotate(-9.5deg);opacity:.5;color:#ff7f0a"><span style="display:inline-block;font-size:20px;font-weight:bold;-webkit-text-stroke:0.3px #ff7f0a;transform:skewX(-8deg);letter-spacing:-0.5px">源码兔</span><span style="display:inline-block;margin-left:13px;font-size:20px;font-weight:bold;letter-spacing:0px">ɯɯɯ.ymter.com</span></div>
<div class="wm" style="left:-2px;top:779px;transform:rotate(-9.5deg);opacity:.5;color:#ff7f0a"><span style="display:inline-block;font-size:20px;font-weight:bold;-webkit-text-stroke:0.3px #ff7f0a;transform:skewX(-8deg);letter-spacing:-0.5px">源码兔</span><span style="display:inline-block;margin-left:13px;font-size:20px;font-weight:bold;letter-spacing:0px">ɯɯɯ.ymter.com</span></div>
<div class="wm" style="left:405px;top:779px;transform:rotate(-9.5deg);opacity:.5;color:#ff7f0a"><span style="display:inline-block;font-size:20px;font-weight:bold;-webkit-text-stroke:0.3px #ff7f0a;transform:skewX(-8deg);letter-spacing:-0.5px">源码兔</span><span style="display:inline-block;margin-left:13px;font-size:20px;font-weight:bold;letter-spacing:0px">ɯɯɯ.ymter.com</span></div>
<div class="wm" style="left:812px;top:779px;transform:rotate(-9.5deg);opacity:.5;color:#ff7f0a"><span style="display:inline-block;font-size:20px;font-weight:bold;-webkit-text-stroke:0.3px #ff7f0a;transform:skewX(-8deg);letter-spacing:-0.5px">源码兔</span><span style="display:inline-block;margin-left:13px;font-size:20px;font-weight:bold;letter-spacing:0px">ɯɯɯ.ymter.com</span></div>
<div class="wm" style="left:1219px;top:779px;transform:rotate(-9.5deg);opacity:.5;color:#ff7f0a"><span style="display:inline-block;font-size:20px;font-weight:bold;-webkit-text-stroke:0.3px #ff7f0a;transform:skewX(-8deg);letter-spacing:-0.5px">源码兔</span><span style="display:inline-block;margin-left:13px;font-size:20px;font-weight:bold;letter-spacing:0px">ɯɯɯ.ymter.com</span></div>
<div class="wm" style="left:1626px;top:779px;transform:rotate(-9.5deg);opacity:.5;color:#ff7f0a"><span style="display:inline-block;font-size:20px;font-weight:bold;-webkit-text-stroke:0.3px #ff7f0a;transform:skewX(-8deg);letter-spacing:-0.5px">源码兔</span><span style="display:inline-block;margin-left:13px;font-size:20px;font-weight:bold;letter-spacing:0px">ɯɯɯ.ymter.com</span></div>
<div class="wm" style="left:2033px;top:779px;transform:rotate(-9.5deg);opacity:.5;color:#ff7f0a"><span style="display:inline-block;font-size:20px;font-weight:bold;-webkit-text-stroke:0.3px #ff7f0a;transform:skewX(-8deg);letter-spacing:-0.5px">源码兔</span><span style="display:inline-block;margin-left:13px;font-size:20px;font-weight:bold;letter-spacing:0px">ɯɯɯ.ymter.com</span></div>
<div class="wm" style="left:-2px;top:979px;transform:rotate(-9.5deg);opacity:.5;color:#ff7f0a"><span style="display:inline-block;font-size:20px;font-weight:bold;-webkit-text-stroke:0.3px #ff7f0a;transform:skewX(-8deg);letter-spacing:-0.5px">源码兔</span><span style="display:inline-block;margin-left:13px;font-size:20px;font-weight:bold;letter-spacing:0px">ɯɯɯ.ymter.com</span></div>
<div class="wm" style="left:405px;top:979px;transform:rotate(-9.5deg);opacity:.5;color:#ff7f0a"><span style="display:inline-block;font-size:20px;font-weight:bold;-webkit-text-stroke:0.3px #ff7f0a;transform:skewX(-8deg);letter-spacing:-0.5px">源码兔</span><span style="display:inline-block;margin-left:13px;font-size:20px;font-weight:bold;letter-spacing:0px">ɯɯɯ.ymter.com</span></div>
<div class="wm" style="left:812px;top:979px;transform:rotate(-9.5deg);opacity:.5;color:#ff7f0a"><span style="display:inline-block;font-size:20px;font-weight:bold;-webkit-text-stroke:0.3px #ff7f0a;transform:skewX(-8deg);letter-spacing:-0.5px">源码兔</span><span style="display:inline-block;margin-left:13px;font-size:20px;font-weight:bold;letter-spacing:0px">ɯɯɯ.ymter.com</span></div>
<div class="wm" style="left:1219px;top:979px;transform:rotate(-9.5deg);opacity:.5;color:#ff7f0a"><span style="display:inline-block;font-size:20px;font-weight:bold;-webkit-text-stroke:0.3px #ff7f0a;transform:skewX(-8deg);letter-spacing:-0.5px">源码兔</span><span style="display:inline-block;margin-left:13px;font-size:20px;font-weight:bold;letter-spacing:0px">ɯɯɯ.ymter.com</span></div>
<div class="wm" style="left:1626px;top:979px;transform:rotate(-9.5deg);opacity:.5;color:#ff7f0a"><span style="display:inline-block;font-size:20px;font-weight:bold;-webkit-text-stroke:0.3px #ff7f0a;transform:skewX(-8deg);letter-spacing:-0.5px">源码兔</span><span style="display:inline-block;margin-left:13px;font-size:20px;font-weight:bold;letter-spacing:0px">ɯɯɯ.ymter.com</span></div>
<div class="wm" style="left:2033px;top:979px;transform:rotate(-9.5deg);opacity:.5;color:#ff7f0a"><span style="display:inline-block;font-size:20px;font-weight:bold;-webkit-text-stroke:0.3px #ff7f0a;transform:skewX(-8deg);letter-spacing:-0.5px">源码兔</span><span style="display:inline-block;margin-left:13px;font-size:20px;font-weight:bold;letter-spacing:0px">ɯɯɯ.ymter.com</span></div>
</body></html>
